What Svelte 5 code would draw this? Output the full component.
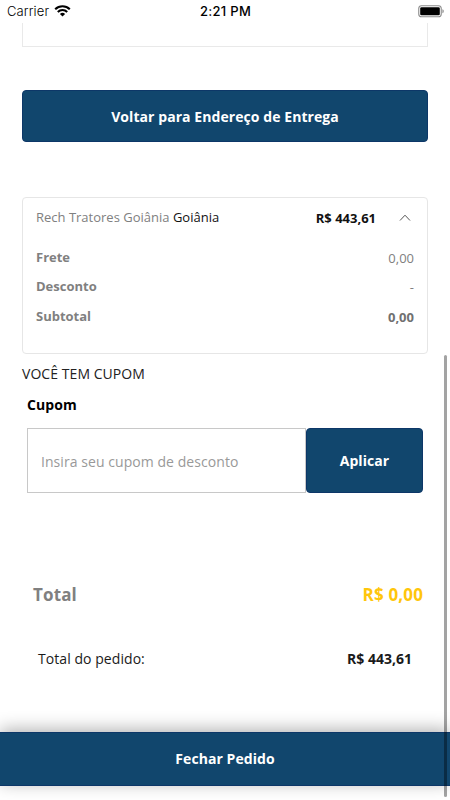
<script lang="ts">
	const seller = { name: 'Rech Tratores Goiânia', city: 'Goiânia', total: 'R$ 443,61' };

	const rows = [
		{ label: 'Frete', value: '0,00', bold: false },
		{ label: 'Desconto', value: '-', bold: false },
		{ label: 'Subtotal', value: '0,00', bold: true }
	];

	let coupon = $state('');
</script>

<div class="screen">
	<header class="status">
		<div class="carrier">
			<span>Carrier</span>
			<svg class="wifi" viewBox="0 0 17 12" width="17" height="12">
				<path d="M1.2 4.3a10.4 10.4 0 0 1 14.6 0" />
				<path d="M3.8 6.9a6.7 6.7 0 0 1 9.4 0" />
				<path class="dot" d="M5.9 9a3.7 3.7 0 0 1 5.2 0L8.5 11.6z" />
			</svg>
		</div>
		<span class="time">2:21 PM</span>
		<svg class="battery" viewBox="0 0 27 13" width="27" height="13">
			<rect class="shell" x="0.75" y="0.75" width="22.5" height="11" rx="2.8" />
			<rect x="2.2" y="2.2" width="19.6" height="8.1" rx="1.3" />
			<path class="cap" d="M24.5 4.3c1.5.4 1.5 3.5 0 3.9z" />
		</svg>
	</header>

	<main>
		<div class="address-end"></div>

		<button class="primary back">Voltar para Endereço de Entrega</button>

		<section class="card">
			<div class="seller">
				<span class="name">{seller.name} <span class="city">{seller.city}</span></span>
				<strong>{seller.total}</strong>
				<svg class="chevron" viewBox="0 0 12 8" width="12" height="8">
					<path d="M1 6.5 6 1.2l5 5.3" />
				</svg>
			</div>
			{#each rows as row}
				<div class="row">
					<span class="label">{row.label}</span>
					<span class="value" class:bold={row.bold}>{row.value}</span>
				</div>
			{/each}
		</section>

		<h2>VOCÊ TEM CUPOM</h2>
		<div class="coupon">
			<label for="coupon">Cupom</label>
			<div class="field">
				<input id="coupon" placeholder="Insira seu cupom de desconto" bind:value={coupon} />
				<button class="primary apply">Aplicar</button>
			</div>
		</div>

		<div class="total">
			<span>Total</span>
			<span class="amount">R$ 0,00</span>
		</div>
		<div class="order-total">
			<span>Total do pedido:</span>
			<strong>{seller.total}</strong>
		</div>
	</main>

	<button class="primary finish">Fechar Pedido</button>
	<div class="scrollbar"></div>
</div>

<style>
	:global(body) {
		margin: 0;
		background: #fff;
	}
	.screen {
		position: relative;
		display: flex;
		flex-direction: column;
		width: 450px;
		height: 800px;
		overflow: hidden;
		background: #fff;
		color: #000;
		font-family: 'Open Sans', 'Noto Sans', sans-serif;
		font-size: 14px;
		font-weight: 400;
		letter-spacing: 0.06px;
	}
	.status {
		display: grid;
		grid-template-columns: 1fr auto 1fr;
		align-items: center;
		flex: none;
		height: 23px;
		padding: 0 5px 0 7px;
		box-sizing: border-box;
		font-family: Inter, Roboto, sans-serif;
		font-size: 13px;
		font-weight: 350;
	}
	.carrier {
		display: flex;
		align-items: center;
		gap: 5px;
		margin-top: -1px;
		letter-spacing: 0.1px;
	}
	.wifi {
		fill: none;
		stroke: #000;
		stroke-width: 2.1;
	}
	.wifi .dot {
		fill: #000;
		stroke: none;
	}
	.time {
		margin: -1px 1px 0 0;
		font-weight: 450;
		letter-spacing: 0.3px;
	}
	.battery {
		justify-self: end;
		margin-top: -1px;
	}
	.shell {
		fill: #fff;
		stroke: #8c8c8c;
		stroke-width: 1.1;
	}
	.cap {
		fill: #777;
	}
	main {
		display: flex;
		flex-direction: column;
		flex: 1;
		padding: 0 22px;
	}
	.address-end {
		height: 23px;
		border: 1px solid #e9e9e9;
		border-top: 0;
	}
	.primary {
		display: flex;
		align-items: center;
		justify-content: center;
		padding: 0;
		border: 1px solid #0d3768;
		border-radius: 4px;
		background: #11466d;
		color: #fff;
		font-family: inherit;
		font-size: 14px;
		font-weight: 700;
		letter-spacing: 0.07px;
	}
	.back {
		height: 52px;
		margin-top: 43px;
	}
	.card {
		height: 157px;
		margin-top: 55px;
		padding: 5px 13px 0;
		box-sizing: border-box;
		border: 1px solid #e6e6e6;
		border-radius: 4px;
		color: #808080;
		font-size: 13px;
		letter-spacing: 0;
	}
	.seller {
		display: flex;
		align-items: center;
		height: 28px;
		margin-bottom: 11px;
	}
	.name {
		flex: 1;
	}
	.city,
	.seller strong {
		color: #111;
	}
	.seller strong {
		margin: 1px 23px 0 0;
	}
	.chevron {
		margin: 2px 3px 0 0;
		fill: none;
		stroke: #555;
		stroke-width: 1;
	}
	.row {
		display: flex;
		align-items: center;
		justify-content: space-between;
		height: 29.5px;
	}
	.label {
		color: #808080;
		font-weight: 700;
	}
	.value {
		margin-top: 2px;
	}
	.bold {
		color: #707070;
		font-weight: 700;
	}
	h2 {
		margin: 10px 0 0;
		color: #222;
		font-size: 14px;
		font-weight: 400;
		line-height: 20px;
	}
	.coupon {
		display: flex;
		flex-direction: column;
		padding: 0 5px;
	}
	label {
		margin: 11px 0 13px;
		font-weight: 700;
		line-height: 20px;
	}
	.field {
		display: flex;
		height: 65px;
	}
	input {
		flex: 1;
		min-width: 0;
		padding: 1px 13px 0;
		border: 1.5px solid #c8c8c8;
		border-radius: 0;
		background: #fff;
		font: inherit;
		letter-spacing: inherit;
	}
	input::placeholder {
		color: #999;
		opacity: 1;
	}
	.apply {
		width: 117px;
	}
	.total {
		display: flex;
		justify-content: space-between;
		margin-top: 90px;
		padding: 0 5px 0 11px;
		color: #808080;
		font-size: 17px;
		font-weight: 700;
		line-height: 24px;
		letter-spacing: 0.15px;
	}
	.amount {
		color: #ffc60b;
	}
	.order-total {
		display: flex;
		justify-content: space-between;
		margin-top: 42px;
		padding: 0 16px;
		color: #1a1a1a;
		line-height: 20px;
	}
	strong {
		font-weight: 700;
		letter-spacing: 0;
	}
	.finish {
		flex: none;
		height: 54px;
		margin-bottom: 14px;
		padding-bottom: 2px;
		border-width: 1px 0;
		border-radius: 0;
		box-shadow: 0 -3px 16px rgba(0, 0, 0, 0.3);
	}
	.scrollbar {
		position: absolute;
		top: 355px;
		right: 3px;
		width: 3px;
		height: 442px;
		border-radius: 2px;
		background: rgba(0, 0, 0, 0.36);
	}
</style>
